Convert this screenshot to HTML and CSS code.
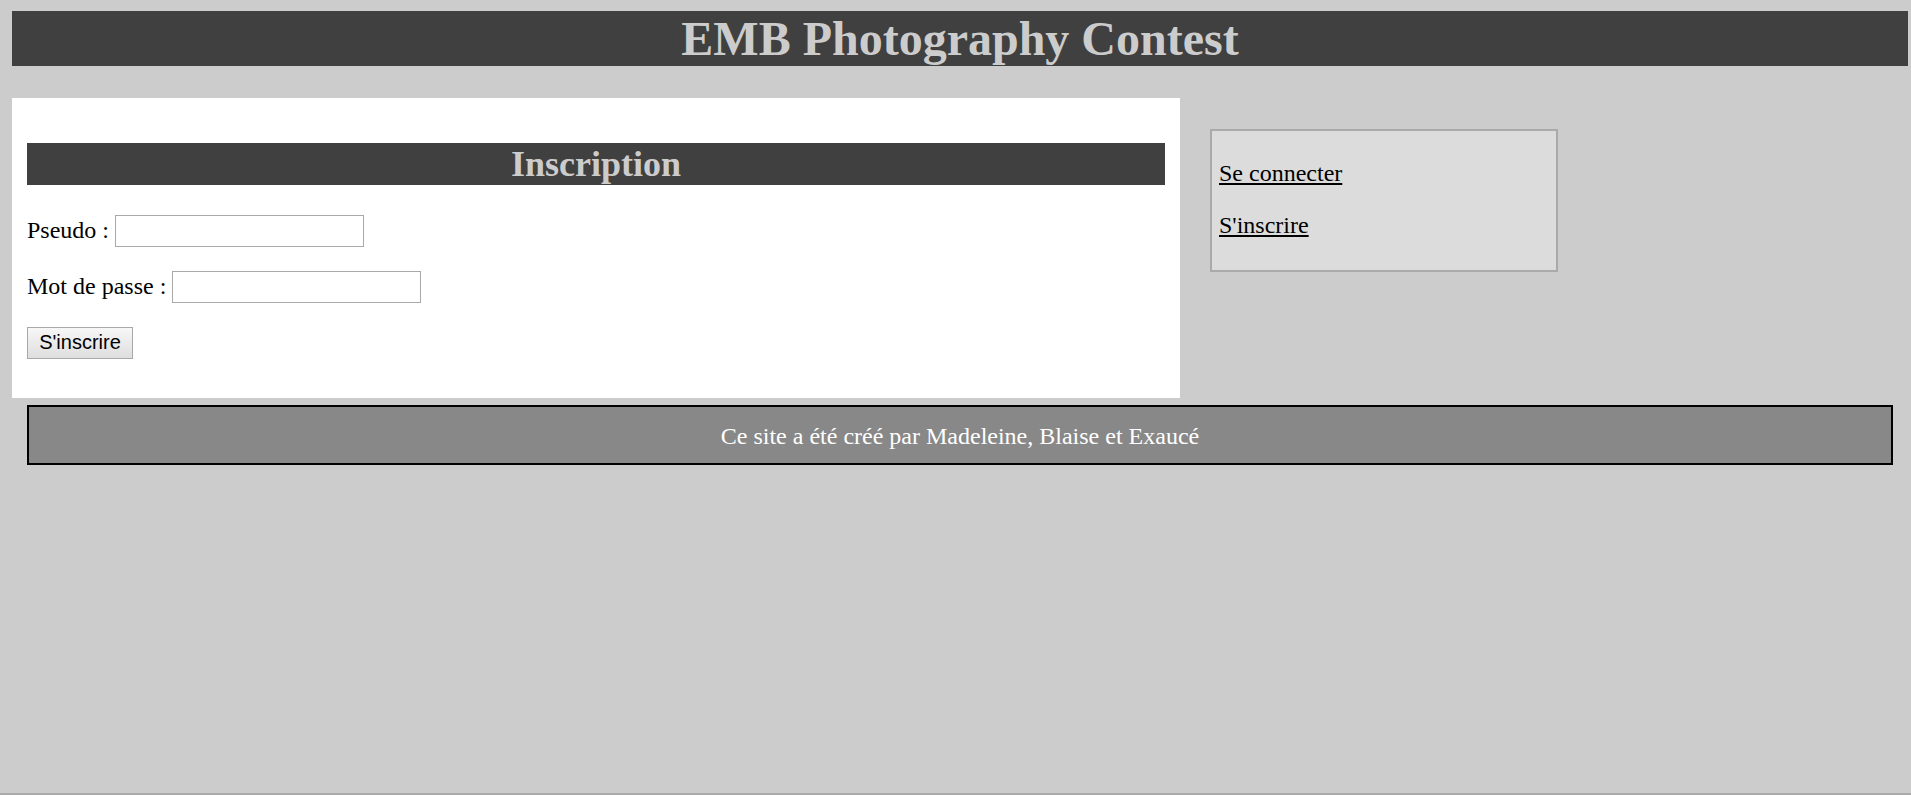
FILE: index.html
```html
<!DOCTYPE html>
<html lang="fr">
<head>
<meta charset="utf-8">
<title>EMB Photography Contest</title>
<link rel="stylesheet" href="styles.css">
</head>
<body>
<header class="site-header">
  <h1 class="site-title">EMB Photography Contest</h1>
</header>
<div class="main-row">
  <section class="panel">
    <h2 class="panel-title">Inscription</h2>
    <form class="signup-form">
      <p class="form-row">Pseudo : <input class="text-input" type="text"></p>
      <p class="form-row">Mot de passe : <input class="text-input" type="password"></p>
      <p class="form-row"><button class="submit-btn" type="button">S'inscrire</button></p>
    </form>
  </section>
  <nav class="side-box">
    <p class="side-link-row"><a class="side-link" href="#">Se connecter</a></p>
    <p class="side-link-row"><a class="side-link" href="#">S'inscrire</a></p>
  </nav>
</div>
<footer class="site-footer">Ce site a été créé par Madeleine, Blaise et Exaucé</footer>
</body>
</html>
```
FILE: styles.css
```css
html {
  background: #cccccc;
  min-height: 100vh;
  box-sizing: border-box;
  border-bottom: 2px solid #ababab;
}
body {
  margin: 0;
  padding: 11px 3px 0 12px;
  font-family: "Liberation Serif", "Times New Roman", serif;
  font-size: 24px;
  color: #000;
}
.site-header {
  background: #404040;
}
.site-title {
  margin: 0;
  font-size: 48px;
  line-height: 55px;
  font-weight: bold;
  text-align: center;
  color: #cccccc;
}
.main-row {
  display: flex;
  align-items: flex-start;
  margin-top: 32px;
}
.panel {
  width: 1168px;
  box-sizing: border-box;
  background: #ffffff;
  padding: 15px;
}
.panel-title {
  margin: 30px 0;
  background: #404040;
  color: #cccccc;
  font-size: 36px;
  line-height: 42px;
  font-weight: bold;
  text-align: center;
}
.signup-form {
  margin: 0;
}
.form-row {
  margin: 24px 0;
  line-height: 27.6px;
}
.text-input {
  width: 249px;
  height: 32px;
  box-sizing: border-box;
  border: 1px solid #a9a9a9;
  padding: 2px 3px;
  font-family: "Liberation Sans", Arial, sans-serif;
  font-size: 20px;
  vertical-align: baseline;
  background: #fff;
}
.submit-btn {
  width: 106px;
  height: 32px;
  box-sizing: border-box;
  border: 1px solid #a9a9a9;
  border-radius: 0;
  background: linear-gradient(#f7f7f7, #dedede);
  font-family: "Liberation Sans", Arial, sans-serif;
  font-size: 20px;
  line-height: 28px;
  color: #000;
  padding: 0 0 2px 0;
}
.side-box {
  width: 348px;
  box-sizing: border-box;
  margin: 31px 0 0 30px;
  padding: 5px 7px 7px 7px;
  background: #dcdcdc;
  border: 2px solid #aaaaaa;
}
.side-link-row {
  margin: 24px 0;
  line-height: 27.6px;
}
.side-link {
  color: #000;
  text-decoration: underline;
}
.site-footer {
  margin: 7px 15px 0 15px;
  background: #888888;
  border: 2px solid #000;
  padding: 15px 0 13px 0;
  line-height: 28px;
  color: #ffffff;
  text-align: center;
}
```
